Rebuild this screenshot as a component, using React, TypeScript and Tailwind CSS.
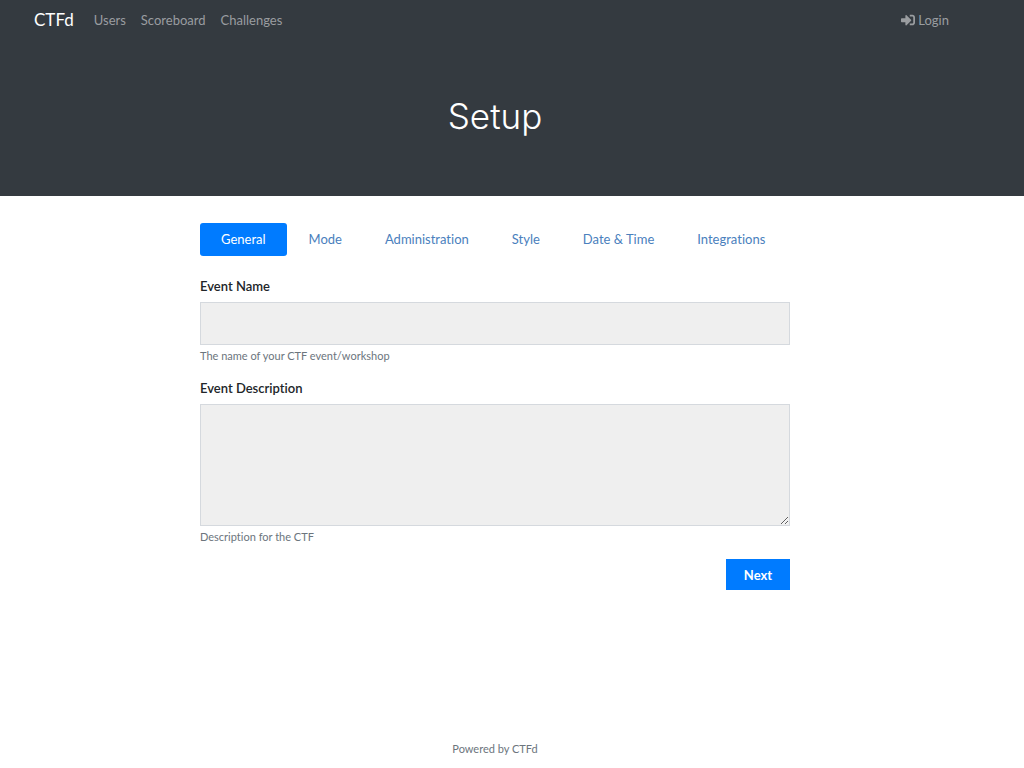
import { useState } from 'react'
import { FaSignInAlt } from 'react-icons/fa'

const navLinks = ['Users', 'Scoreboard', 'Challenges']

const steps = ['General', 'Mode', 'Administration', 'Style', 'Date & Time', 'Integrations']

function Navbar() {
  return (
    <nav className="flex h-10 items-center justify-between pl-[34px] pr-[75px]">
      <div className="flex items-center">
        <a href="#" className="mr-5 text-[17px] leading-6 text-white">CTFd</a>
        <div className="flex gap-[15px]">
          {navLinks.map(label => (
            <a key={label} href="#" className="text-[#9a9da0] hover:text-white">{label}</a>
          ))}
        </div>
      </div>
      <a href="#" className="flex items-center gap-[3px] text-[#9a9da0] hover:text-white">
        <FaSignInAlt className="h-[14px] w-[14px]" />
        Login
      </a>
    </nav>
  )
}

export default function App() {
  const [active, setActive] = useState('General')

  return (
    <div className="flex min-h-screen flex-col bg-white font-['Lato',sans-serif] text-[13px] leading-5 text-[#212529] [font-variant-ligatures:none]">
      <header className="bg-[#343a40]">
        <Navbar />
        {/* Jumbotron */}
        <div className="pt-[52px] pb-[56px] pr-[34px] text-center">
          <h1 className="font-['Inter',sans-serif] text-[35px] font-light leading-[48px] text-white">Setup</h1>
        </div>
      </header>

      <main className="flex-1 pr-[34px] pt-[27px]">
        <div className="mx-auto max-w-[590px]">
          <div role="tablist" className="mb-5 flex gap-px">
            {steps.map(step => (
              <button
                key={step}
                type="button"
                role="tab"
                aria-selected={active === step}
                onClick={() => setActive(step)}
                className={
                  active === step
                    ? 'h-[33px] cursor-pointer rounded-[3px] bg-[#007bff] px-[21px] pb-0.5 text-white'
                    : 'h-[33px] cursor-pointer rounded-[3px] px-[21px] pb-0.5 text-[#4a80bd]'
                }
              >
                {step}
              </button>
            ))}
          </div>

          <form onSubmit={e => e.preventDefault()}>
            <div className="mb-3">
              <label htmlFor="event-name" className="mb-[6px] block font-semibold">Event Name</label>
              <input
                id="event-name"
                type="text"
                className="block h-[43px] w-full border border-[#d5d9de] bg-[#efefef] px-3 outline-none"
              />
              <small className="mt-px block text-[11px] text-[#6c757d]">The name of your CTF event/workshop</small>
            </div>
            <div className="mb-3">
              <label htmlFor="event-description" className="mb-[6px] block font-semibold">Event Description</label>
              <textarea
                id="event-description"
                className="block h-[122px] w-full resize-y border border-[#d5d9de] bg-[#efefef] px-3 py-2 outline-none"
              />
              <small className="mt-px block text-[11px] text-[#6c757d]">Description for the CTF</small>
            </div>
            <div className="flex justify-end">
              <button type="submit" className="h-[31px] w-16 cursor-pointer bg-[#007bff] font-bold text-white">
                Next
              </button>
            </div>
          </form>
        </div>
      </main>

      <footer className="pb-[9px] pr-[34px] text-center">
        <a href="#" className="text-[11px] text-[#6c757d]">Powered by CTFd</a>
      </footer>
    </div>
  )
}
